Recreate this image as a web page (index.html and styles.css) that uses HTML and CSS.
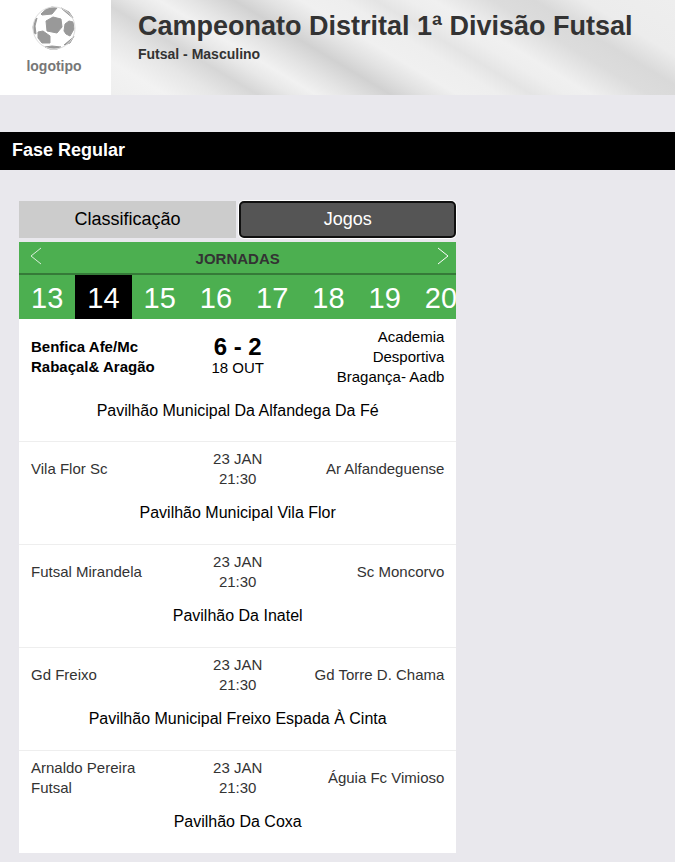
FILE: index.html
```
<!DOCTYPE html>
<html lang="pt">
<head>
    <meta charset="UTF-8">
    <meta name="viewport" content="width=device-width, initial-scale=1">
    <title>Campeonato Distrital 1ª Divisão Futsal</title>
    <link rel="stylesheet" href="styles.css">
</head>
<body>
    <header class="header">
        <div class="logo">
            <svg class="ball" viewBox="0 0 44 44" aria-hidden="true">
                <path d="M14 15 L21 11 L29 13 L30 21 L25 27 L15 25Z"/>
                <path d="M9 8 Q14 2 20 1 L25 2 L20 8 L10 9Z"/>
                <path d="M33 18 L37 15 L41 16 L42 23 L38 30 L34 28 L32 25Z"/>
                <path d="M6 26 L11 25 L18 30 L18 37 L10 37 L6 32Z"/>
                <path d="M13 41 L20 40 L29 41 L25 43 L18 43Z"/>
                <path d="M32 39 L38 34 L42 30 L38 37Z"/>
                <path d="M1 21 L3 14 L5 12 L3 20 L4 28 L2 27Z"/>
                <path d="M29 2 L37 6 L41 12 L36 8Z"/>
                <circle class="rim" cx="22" cy="22" r="21"/>
            </svg>
            <span>logotipo</span>
        </div>
        <div class="heading">
            <h1>Campeonato Distrital 1ª Divisão Futsal</h1>
            <p>Futsal - Masculino</p>
        </div>
    </header>

    <h2 class="phase">Fase Regular</h2>

    <main class="content">
        <div class="panel">
            <div class="tabs">
                <button type="button" class="tab">Classificação</button>
                <button type="button" class="tab active">Jogos</button>
            </div>

            <div class="rounds-head">
                <button type="button" class="arrow prev" aria-label="Anterior">
                    <svg viewBox="0 0 12 18"><path d="M11 1 L1 9 L11 17"/></svg>
                </button>
                <h3>JORNADAS</h3>
                <button type="button" class="arrow next" aria-label="Seguinte">
                    <svg viewBox="0 0 12 18"><path d="M1 1 L11 9 L1 17"/></svg>
                </button>
            </div>
            <nav class="rounds">
                <a href="#">13</a>
                <a href="#" class="current">14</a>
                <a href="#">15</a>
                <a href="#">16</a>
                <a href="#">17</a>
                <a href="#">18</a>
                <a href="#">19</a>
                <a href="#">20</a>
            </nav>

            <div class="games">
                <div class="game played">
                    <div class="teams">
                        <div class="home winner">Benfica Afe/Mc Rabaçal&amp; Aragão</div>
                        <div class="when"><strong>6 - 2</strong>18 OUT</div>
                        <div class="away">Academia Desportiva Bragança- Aadb</div>
                    </div>
                    <p class="venue">Pavilhão Municipal Da Alfandega Da Fé</p>
                </div>
                <div class="game">
                    <div class="teams">
                        <div class="home">Vila Flor Sc</div>
                        <div class="when">23 JAN<br>21:30</div>
                        <div class="away">Ar Alfandeguense</div>
                    </div>
                    <p class="venue">Pavilhão Municipal Vila Flor</p>
                </div>
                <div class="game">
                    <div class="teams">
                        <div class="home">Futsal Mirandela</div>
                        <div class="when">23 JAN<br>21:30</div>
                        <div class="away">Sc Moncorvo</div>
                    </div>
                    <p class="venue">Pavilhão Da Inatel</p>
                </div>
                <div class="game">
                    <div class="teams">
                        <div class="home">Gd Freixo</div>
                        <div class="when">23 JAN<br>21:30</div>
                        <div class="away">Gd Torre D. Chama</div>
                    </div>
                    <p class="venue">Pavilhão Municipal Freixo Espada À Cinta</p>
                </div>
                <div class="game">
                    <div class="teams">
                        <div class="home">Arnaldo Pereira Futsal</div>
                        <div class="when">23 JAN<br>21:30</div>
                        <div class="away">Águia Fc Vimioso</div>
                    </div>
                    <p class="venue">Pavilhão Da Coxa</p>
                </div>
            </div>
        </div>
    </main>
</body>
</html>
```
FILE: styles.css
```
* {
    box-sizing: border-box;
}

body {
    margin: 0;
    font-family: "Liberation Sans", Arial, sans-serif;
    font-size: 15px;
    line-height: 20px;
    color: #333;
    background-color: #e9e8ed;
}

h1, h2, h3, p {
    margin: 0;
}

.header {
    display: flex;
    min-height: 95px;
    background: linear-gradient(31deg, #eee 12%, #f2f2f2 20%, #e6e6e6 26%, #d6d6d6 31%, #e8e8e8 35%, #f1f1f1 38%, #e4e4e4 42%, #d1d1d1 47%, #e2e2e2 51%, #f0f0f0 55%, #eee 60%, #e4e4e4 64%, #eee 68%, #f0f0f0 71%, #dcdcdc 78%, #d9d9d9 83%, #ececec 89%, #eee 100%);
}

.logo {
    display: flex;
    flex-direction: column;
    align-items: center;
    flex: none;
    width: 111px;
    padding: 6px 3px 0 0;
    background-color: white;
    color: #777;
    font-size: 14px;
    font-weight: bold;
}

.ball {
    width: 44px;
    height: 44px;
    margin-bottom: 6px;
    fill: #999;
    stroke: #999;
    stroke-width: 1;
    stroke-linejoin: round;
}

.ball .rim {
    fill: none;
    stroke: #ddd;
}

.heading {
    padding: 9px 0 0 27px;
}

.heading h1 {
    font-size: 27px;
    line-height: 34px;
}

.heading p {
    font-size: 14px;
    line-height: 22px;
    font-weight: bold;
}

.phase {
    margin-top: 37px;
    padding: 7px 12px 9px;
    font-size: 18px;
    line-height: 22px;
    color: white;
    background-color: black;
}

.content {
    padding: 31px 0 10px 19px;
}

.panel {
    width: 66.6667%;
}

.tabs {
    display: grid;
    grid-template-columns: 1fr 1fr;
    gap: 3px;
    margin-bottom: 4px;
}

.tab {
    height: 37px;
    padding: 0;
    border: none;
    font-family: inherit;
    font-size: 18px;
    color: black;
    background-color: #ccc;
    cursor: pointer;
}

.tab.active {
    color: white;
    background-color: #555;
    border: 2px solid #101010;
    border-radius: 5px;
    box-shadow: 0 0 0 1px white;
}

.rounds-head {
    display: grid;
    grid-template-columns: 1fr auto 1fr;
    padding: 5px 7px 2px;
    border-bottom: 2px solid #357a38;
    background-color: #4caf50;
}

.rounds-head h3 {
    font-size: 15px;
    line-height: 24px;
}

.arrow {
    display: flex;
    padding: 0;
    border: none;
    background: none;
    cursor: pointer;
}

.arrow svg {
    width: 12px;
    height: 18px;
    fill: none;
    stroke: white;
    stroke-width: 1;
}

.prev {
    justify-self: start;
    margin-left: 4px;
    opacity: 0.8;
}

.next {
    justify-self: end;
}

.rounds {
    display: flex;
    overflow: hidden;
    background-color: #4caf50;
}

.rounds a {
    flex: none;
    padding: 2px 12px 0;
    font-size: 29px;
    line-height: 42px;
    color: white;
    text-decoration: none;
}

.rounds .current {
    background-color: black;
}

.games {
    background-color: white;
}

.game {
    padding: 7px 12px 20px;
    border-bottom: 1px solid #eee;
}

.game:last-child {
    border-bottom: none;
}

.teams {
    display: grid;
    grid-template-columns: 1fr 1fr 1fr;
    align-items: center;
}

.when {
    text-align: center;
}

.when strong {
    display: block;
    font-size: 24px;
    line-height: 22px;
}

.away {
    text-align: right;
}

.winner {
    font-weight: bold;
}

.played {
    padding: 8px 12px 19px;
    color: black;
}

.venue {
    margin-top: 13px;
    font-size: 16px;
    line-height: 22px;
    text-align: center;
    color: black;
}
```
